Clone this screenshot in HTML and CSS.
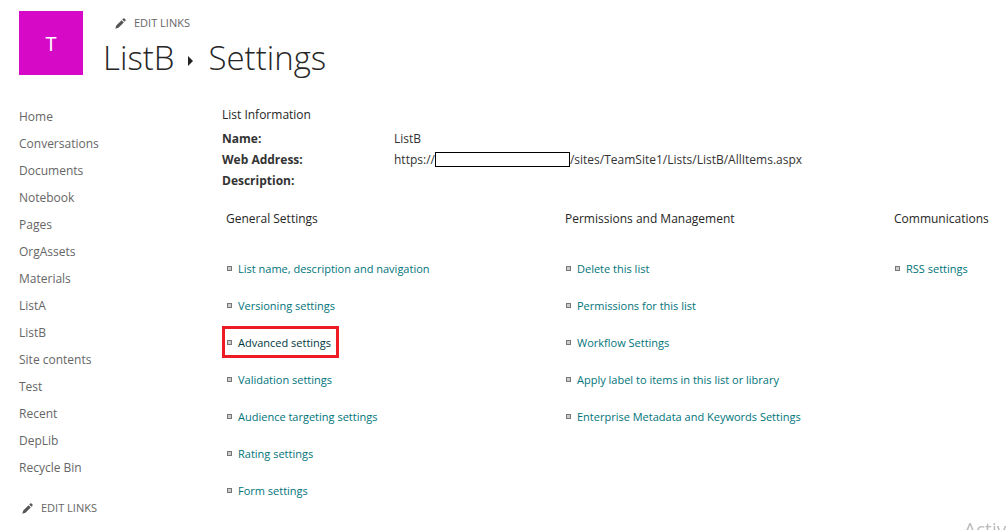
FILE: index.html
```html
<!DOCTYPE html>
<html lang="en">
<head>
    <meta charset="UTF-8">
    <meta name="viewport" content="width=device-width, initial-scale=1.0">
    <title>ListB - Settings</title>
    <link rel="stylesheet" href="styles.css">
</head>
<body>
<svg class="sprite" aria-hidden="true">
    <symbol id="pencil" viewBox="0 0 12 12">
        <path d="M0.3 11.7 L1.4 8.2 L7.2 2.4 L9.6 4.8 L3.8 10.6 Z M7.9 1.7 L9 0.6 Q9.7 0 10.4 0.6 L11.4 1.6 Q12 2.3 11.4 3 L10.3 4.1 Z" fill="#555"/>
    </symbol>
</svg>

<header>
    <a class="logo" href="#home">T</a>
    <div class="heading">
        <button class="edit-links" type="button"><svg class="pencil"><use href="#pencil"/></svg>EDIT LINKS</button>
        <h1>
            <a href="#listb">ListB</a>
            <svg class="arrow" viewBox="0 0 5 10"><path d="M0 0 L5 5 L0 10 Z" fill="#222"/></svg>
            <span>Settings</span>
        </h1>
    </div>
</header>

<div class="content">
    <nav>
        <ul>
            <li><a href="#home">Home</a></li>
            <li><a href="#conversations">Conversations</a></li>
            <li><a href="#documents">Documents</a></li>
            <li><a href="#notebook">Notebook</a></li>
            <li><a href="#pages">Pages</a></li>
            <li><a href="#orgassets">OrgAssets</a></li>
            <li><a href="#materials">Materials</a></li>
            <li><a href="#lista">ListA</a></li>
            <li><a href="#listb">ListB</a></li>
            <li><a href="#contents">Site contents</a></li>
            <li><a href="#test">Test</a></li>
            <li><a href="#recent">Recent</a></li>
            <li><a href="#deplib">DepLib</a></li>
            <li><a href="#recycle">Recycle Bin</a></li>
        </ul>
        <button class="edit-links" type="button"><svg class="pencil"><use href="#pencil"/></svg>EDIT LINKS</button>
    </nav>

    <main>
        <h2>List Information</h2>
        <table class="info">
            <tr><th scope="row">Name:</th><td>ListB</td></tr>
            <tr><th scope="row">Web Address:</th><td><div class="address">https://<span class="redacted"></span>/sites/TeamSite1/Lists/ListB/AllItems.aspx</div></td></tr>
            <tr><th scope="row">Description:</th><td></td></tr>
        </table>

        <div class="settings">
            <section>
                <h2>General Settings</h2>
                <ul>
                    <li><a href="#name">List name, description and navigation</a></li>
                    <li><a href="#versioning">Versioning settings</a></li>
                    <li class="marked"><a href="#advanced">Advanced settings</a></li>
                    <li><a href="#validation">Validation settings</a></li>
                    <li><a href="#audience">Audience targeting settings</a></li>
                    <li><a href="#rating">Rating settings</a></li>
                    <li><a href="#form">Form settings</a></li>
                </ul>
            </section>
            <section>
                <h2>Permissions and Management</h2>
                <ul>
                    <li><a href="#delete">Delete this list</a></li>
                    <li><a href="#permissions">Permissions for this list</a></li>
                    <li><a href="#workflow">Workflow Settings</a></li>
                    <li><a href="#label">Apply label to items in this list or library</a></li>
                    <li><a href="#metadata">Enterprise Metadata and Keywords Settings</a></li>
                </ul>
            </section>
            <section>
                <h2>Communications</h2>
                <ul>
                    <li><a href="#rss">RSS settings</a></li>
                </ul>
            </section>
        </div>
    </main>
</div>

<div class="watermark">Activ</div>
</body>
</html>
```
FILE: styles.css
```css
body {
    font-family: 'Open Sans', 'Noto Sans', sans-serif;
    font-size: 12px;
    margin: 0;
    color: #333;
    background-color: #fff;
}

a {
    color: inherit;
    text-decoration: none;
}

a:hover {
    text-decoration: underline;
}

ul {
    list-style: none;
    margin: 0;
    padding: 0;
}

.sprite {
    display: none;
}

header {
    display: flex;
    gap: 20px;
    padding: 11px 19px 0;
}

.logo {
    display: flex;
    align-items: center;
    justify-content: center;
    width: 64px;
    height: 64px;
    background-color: #d60ac6;
    color: #fff;
    font-size: 20px;
}

.heading {
    padding-top: 4px;
}

.edit-links {
    display: flex;
    align-items: center;
    gap: 8px;
    background: none;
    border: none;
    margin: 0;
    padding: 0;
    color: #666;
    font-family: inherit;
    font-size: 11px;
    line-height: 16px;
    cursor: pointer;
}

.heading .edit-links {
    margin-left: 12px;
}

.pencil {
    width: 11px;
    height: 11px;
}

h1 {
    display: flex;
    align-items: center;
    margin: 4px 0 0;
    color: #262626;
    font-size: 33px;
    font-weight: 300;
    line-height: 46px;
}

.arrow {
    width: 5px;
    height: 10px;
    margin: 6px 15px 0 14px;
}

h2 {
    margin: 0;
    color: #262626;
    font-size: 12px;
    font-weight: 400;
    line-height: 20px;
}

.content {
    display: flex;
    padding: 22px 0 0 19px;
}

nav {
    width: 203px;
    flex-shrink: 0;
    color: #666;
}

nav li {
    line-height: 27px;
}

nav .edit-links {
    margin: 19px 0 0 3px;
}

main {
    flex: 1;
    padding-top: 2px;
}

.info {
    border-collapse: collapse;
    margin-top: 3px;
}

.info th,
.info td {
    padding: 0;
    line-height: 21px;
    text-align: left;
}

.info th {
    width: 172px;
}

.address {
    display: flex;
    align-items: center;
}

.redacted {
    box-sizing: border-box;
    width: 135px;
    height: 15px;
    border: 1px solid #000;
}

.settings {
    display: grid;
    grid-template-columns: 339fr 329fr 113fr;
    padding: 18px 0 0 4px;
}

.settings ul {
    padding-top: 21px;
    font-size: 11px;
}

.settings li {
    display: flex;
    align-items: center;
    gap: 6px;
    height: 37px;
    color: #00747a;
}

.settings li::before {
    content: "";
    box-sizing: border-box;
    width: 5px;
    height: 5px;
    margin-left: 1px;
    border: 1px solid #777;
    background-color: #ccc;
}

.settings .marked {
    box-sizing: border-box;
    width: fit-content;
    height: 32px;
    margin: 2px 0 3px -4px;
    padding: 0 5px 0 1px;
    border: 3px solid #ed1c24;
    color: #00383d;
}

.watermark {
    position: fixed;
    right: 0;
    bottom: 0;
    width: 43px;
    height: 14px;
    overflow: hidden;
    color: #bbb;
    font-size: 19px;
    line-height: 26px;
}
```
